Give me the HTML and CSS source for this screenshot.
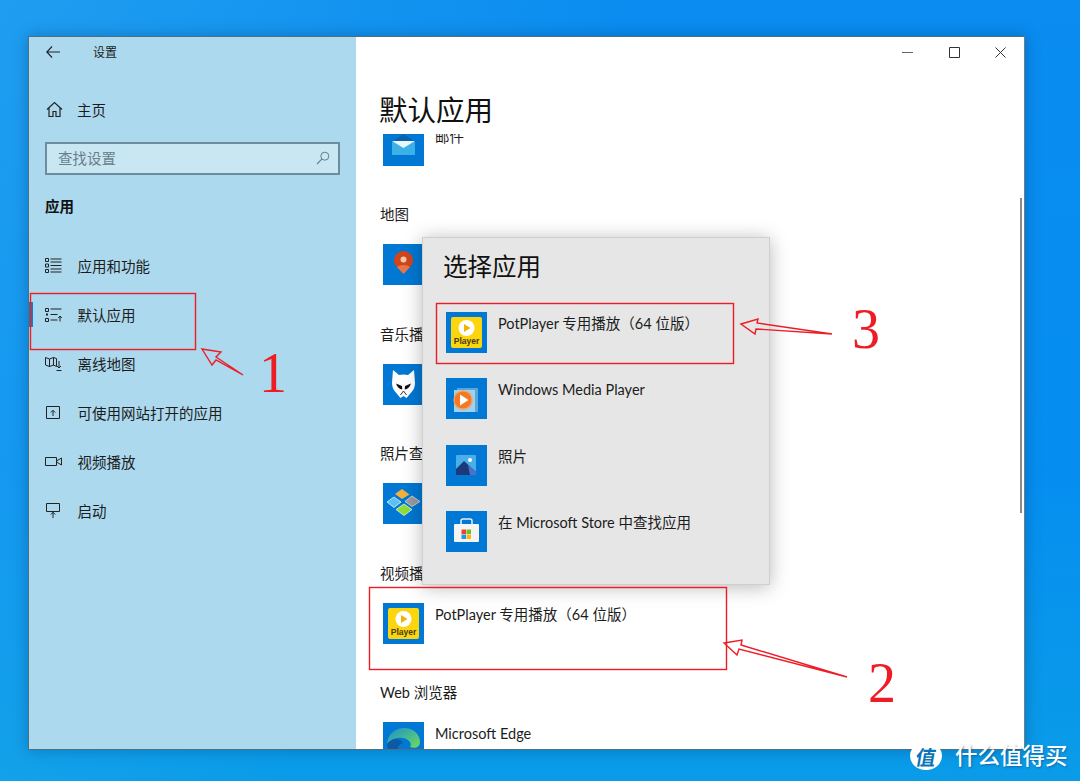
FILE: index.html
```html
<!DOCTYPE html>
<html lang="zh-CN">
<head>
  <meta charset="UTF-8">
  <title>设置 – 默认应用</title>
  <link rel="stylesheet" href="styles.css">
</head>
<body>
  <!-- icons used more than once -->
  <svg class="defs" width="0" height="0">
    <symbol id="icon-potplayer" viewBox="0 0 41 41">
      <rect x="5" y="5" width="31" height="31" rx="2" fill="#fbd60f"/>
      <circle cx="20.5" cy="16" r="8" fill="#fff"/>
      <path d="M18 12l6.500 4-6.500 4z" fill="#f0b400"/>
      <text class="player-label" x="20.5" y="32" text-anchor="middle">Player</text>
    </symbol>
  </svg>

  <div class="window">
    <aside class="sidebar">
      <div class="titlebar">
        <svg class="back-icon" width="14" height="12" viewBox="0 0 14 12"><path d="M6 .5L.8 6l5.200 5.500M.8 6H14" fill="none" stroke="#222" stroke-width="1.100"/></svg>
        <span class="titlebar-text">设置</span>
      </div>

      <div class="home-link">
        <svg width="17" height="17" viewBox="0 0 17 17"><path d="M1 8.500L8.500 1.500 16 8.500M3 7v8.500h4v-5h3v5h4V7" fill="none" stroke="#222" stroke-width="1.200"/></svg>
        <span>主页</span>
      </div>

      <div class="search-box">
        <span>查找设置</span>
        <svg width="14" height="14" viewBox="0 0 14 14"><circle cx="8.800" cy="5.200" r="4" fill="none" stroke="#5f7f8d"/><path d="M5.800 8.200L1 13" stroke="#5f7f8d" stroke-width="1.100"/></svg>
      </div>

      <h2 class="section-title">应用</h2>

      <nav class="nav">
        <div class="nav-item">
          <svg width="17" height="17" viewBox="0 0 17 17"><path d="M0.500 1.500h3v3h-3zM0.500 7h3v3h-3zM0.500 12.500h3v3h-3z" fill="none" stroke="#222"/><path d="M5.500 2h11M5.500 5h11M5.500 8.500h11M5.500 12h11M5.500 15h11" stroke="#222"/></svg>
          <span>应用和功能</span>
        </div>
        <div class="nav-item is-active">
          <svg width="17" height="17" viewBox="0 0 17 17"><path d="M0.500 2.500h3v3h-3zM0.500 12.500h3v3h-3z" fill="none" stroke="#222"/><path d="M1 8.500h2" stroke="#222" stroke-width="2"/><path d="M5.500 3h11M5.500 8.500h7M5.500 14h7" stroke="#222"/><path d="M15 15.500v-5M13.200 12L15 10l1.800 2" fill="none" stroke="#222"/></svg>
          <span>默认应用</span>
        </div>
        <div class="nav-item">
          <svg width="17" height="17" viewBox="0 0 17 17"><path d="M0.500 2.500l4 1.500 4-1.500 3 1v8l-3-1.500-4 1.500-4-1.500zM4.500 4v8M8.500 2.500v8" fill="none" stroke="#222"/><path d="M14 6v7M12 11l2 2 2-2M11.500 15.500h5" fill="none" stroke="#222"/></svg>
          <span>离线地图</span>
        </div>
        <div class="nav-item">
          <svg width="17" height="17" viewBox="0 0 17 17"><path d="M1.500 2.500h13v12h-13z" fill="none" stroke="#222"/><path d="M8 12V6.500M5.800 8.500L8 6.300l2.200 2.200" fill="none" stroke="#222"/></svg>
          <span>可使用网站打开的应用</span>
        </div>
        <div class="nav-item">
          <svg width="17" height="17" viewBox="0 0 17 17"><path d="M0.500 4.500h11v8h-11zM11.500 8l5-3v7l-5-3" fill="none" stroke="#222"/></svg>
          <span>视频播放</span>
        </div>
        <div class="nav-item">
          <svg width="17" height="17" viewBox="0 0 17 17"><path d="M1.500 1.500h13v8h-13z" fill="none" stroke="#222"/><path d="M8 16v-6M5.800 12.500L8 10.300l2.200 2.200" fill="none" stroke="#222"/></svg>
          <span>启动</span>
        </div>
      </nav>
    </aside>

    <main class="main">
      <div class="window-controls">
        <div class="window-btn"><svg width="11" height="11" viewBox="0 0 11 11"><path d="M0 5.500h11" stroke="#666"/></svg></div>
        <div class="window-btn"><svg width="11" height="11" viewBox="0 0 11 11"><path d="M0.500 0.500h10v10h-10z" fill="none" stroke="#333"/></svg></div>
        <div class="window-btn"><svg width="11" height="11" viewBox="0 0 11 11"><path d="M0.500 0.500l10 10M10.500 0.500l-10 10" stroke="#333"/></svg></div>
      </div>

      <h1 class="page-title">默认应用</h1>

      <div class="app-list">
        <div class="app-group first">
          <div class="app-row">
            <svg class="app-tile" viewBox="0 0 41 41">
              <rect width="41" height="41" fill="#0078d4"/>
              <path d="M9 17L20.500 9 32 17z" fill="#0a62ad"/>
              <rect x="9" y="17" width="23" height="13" fill="#3cb1e8"/>
              <path d="M9 16h23l-11.500 7z" fill="#e9f6fc"/>
            </svg>
            <span>邮件</span>
          </div>
        </div>

        <div class="app-group">
          <div class="group-label">地图</div>
          <div class="app-row">
            <svg class="app-tile" viewBox="0 0 41 41">
              <rect width="41" height="41" fill="#0078d4"/>
              <path d="M20.500 7a9.500 9.500 0 0 1 9.500 9.500c0 5-5 8-9.500 13.500C16 24.500 11 21.500 11 16.500A9.500 9.500 0 0 1 20.500 7z" fill="#d2451a"/>
              <path d="M14 23a8 5 0 0 1 13 0l-6.500 7z" fill="#e8764a"/>
              <circle cx="20.500" cy="15.500" r="3" fill="#f5c9a8"/>
            </svg>
          </div>
        </div>

        <div class="app-group">
          <div class="group-label">音乐播放器</div>
          <div class="app-row">
            <svg class="app-tile" viewBox="0 0 41 41">
              <rect width="41" height="41" fill="#0078d4"/>
              <path d="M10 6l6 5q4.500-1 9 0l6-5 1 13q0 5-3 8.500l-5.500 6.500-3-2-3 2-5.500-6.500q-3-3.500-3-8.500z" fill="#fff"/>
              <path d="M13 19.500l6 2.500.3 3.500q-4.500-.5-6.300-6zM28 19.500l-6 2.500-.3 3.500q4.500-.5 6.300-6z" fill="#111"/>
              <path d="M17.500 31l3-4 3 4" fill="none" stroke="#333"/>
            </svg>
          </div>
        </div>

        <div class="app-group">
          <div class="group-label">照片查看器</div>
          <div class="app-row">
            <svg class="app-tile" viewBox="0 0 41 41">
              <rect width="41" height="41" fill="#0078d4"/>
              <path d="M19 6l7.500 5.500L19 16l-7-5z" fill="#f4b03c"/>
              <path d="M11 14l7 5-7 5.500L4 19z" fill="#5cc0f0" stroke="#dff3fb" stroke-width=".8"/>
              <path d="M29 13l8 5.500-8 5-7-5z" fill="#9a9a9a" stroke="#ddd" stroke-width=".8"/>
              <path d="M21 21l8 5.500-8 6-8-6z" fill="#8fdc3c" stroke="#e4f6d0" stroke-width=".8"/>
            </svg>
          </div>
        </div>

        <div class="app-group">
          <div class="group-label">视频播放器</div>
          <div class="app-row">
            <svg class="app-tile" viewBox="0 0 41 41">
              <rect width="41" height="41" fill="#0078d4"/>
              <use href="#icon-potplayer"/>
            </svg>
            <span>PotPlayer 专用播放（64 位版）</span>
          </div>
        </div>

        <div class="app-group">
          <div class="group-label">Web 浏览器</div>
          <div class="app-row">
            <svg class="app-tile" viewBox="0 0 41 41">
              <defs>
                <linearGradient id="edge-top" x1="0" y1="0" x2="1" y2="1">
                  <stop offset="0" stop-color="#1a8fd0"/>
                  <stop offset="1" stop-color="#6fdc5a"/>
                </linearGradient>
              </defs>
              <rect width="41" height="41" fill="#0078d4"/>
              <path d="M4 22C5 11 13 6 21 6c9 0 16 6 16 14 0 5-5 7-10 5 1-1 1-3 0-5-4-6-17-6-23 2z" fill="url(#edge-top)"/>
              <path d="M4 22c5-7 14-6 16-1-5 1-7 7-4 13C9 33 4 28 4 22z" fill="#0c5aa6"/>
            </svg>
            <span>Microsoft Edge</span>
          </div>
        </div>
      </div>

      <div class="scrollbar"></div>
    </main>
  </div>

  <div class="chooser">
    <h3 class="chooser-title">选择应用</h3>
    <div class="chooser-list">
      <div class="chooser-row">
        <svg class="app-tile" viewBox="0 0 41 41">
          <rect width="41" height="41" fill="#0078d4"/>
          <use href="#icon-potplayer"/>
        </svg>
        <span>PotPlayer 专用播放（64 位版）</span>
      </div>
      <div class="chooser-row">
        <svg class="app-tile" viewBox="0 0 41 41">
          <rect width="41" height="41" fill="#0078d4"/>
          <rect x="11" y="10" width="21" height="24" fill="#5aa6d8"/>
          <rect x="8" y="12" width="21" height="22" fill="#9fd0ec"/>
          <circle cx="17" cy="22" r="9.500" fill="#f47a20"/>
          <circle cx="17" cy="22" r="9" fill="none" stroke="#fbc9a0" stroke-width=".6"/>
          <path d="M14 16.500l8.500 5.500-8.500 5.500z" fill="#fff"/>
        </svg>
        <span>Windows Media Player</span>
      </div>
      <div class="chooser-row">
        <svg class="app-tile" viewBox="0 0 41 41">
          <rect width="41" height="41" fill="#0078d4"/>
          <rect x="10" y="10" width="20" height="20" rx="1" fill="#49aeea"/>
          <circle cx="24" cy="15" r="2" fill="#fff"/>
          <path d="M10 30v-6l8-8 12 11v3z" fill="#1b3a7a"/>
          <path d="M22 20l8 7v3h-6z" fill="#4f70c9"/>
        </svg>
        <span>照片</span>
      </div>
      <div class="chooser-row">
        <svg class="app-tile" viewBox="0 0 41 41">
          <rect width="41" height="41" fill="#0078d4"/>
          <path d="M15 13v-3q0-2 2-2h7q2 0 2 2v3" fill="none" stroke="#e8eef2" stroke-width="1.500"/>
          <rect x="8" y="13" width="25" height="18" rx="1" fill="#f4f4f4"/>
          <rect x="15.500" y="18.500" width="4.500" height="4.500" fill="#e8452c"/>
          <rect x="20.500" y="18.500" width="4.500" height="4.500" fill="#6ebe30"/>
          <rect x="15.500" y="23.500" width="4.500" height="4.500" fill="#1f9ae0"/>
          <rect x="20.500" y="23.500" width="4.500" height="4.500" fill="#fbb910"/>
        </svg>
        <span>在 Microsoft Store 中查找应用</span>
      </div>
    </div>
  </div>

  <!-- red markup drawn on top of the screenshot -->
  <svg class="markup" width="1080" height="781" viewBox="0 0 1080 781">
    <g class="markup-lines">
      <rect x="30.500" y="293.500" width="165" height="56"/>
      <rect x="369.500" y="587.500" width="357" height="82"/>
      <rect x="436.500" y="303.500" width="297" height="60"/>
      <path d="M202 349L221 352 216 357 243 375 216 360 212 365z"/>
      <path d="M724 643L742 640 741 645 847 677 739 649 737 655z"/>
      <path d="M741 324L758 319 757 323 832 334 756 329 755 334z"/>
    </g>
    <text class="markup-digit" x="259" y="392">1</text>
    <text class="markup-digit" x="868" y="702">2</text>
    <text class="markup-digit" x="852" y="348">3</text>
  </svg>

  <div class="watermark">
    <span class="watermark-badge"><span>值</span></span>
    <span class="watermark-text">什么值得买</span>
  </div>
</body>
</html>
```

FILE: styles.css
```css
* {
  box-sizing: border-box;
}

body {
  margin: 0;
  width: 1080px;
  height: 781px;
  overflow: hidden;
  position: relative;
  padding: 36px 0 0 28px;
  font-family: Lato, "Noto Sans CJK SC", sans-serif;
  font-size: 14.5px;
  color: #1c1c1c;
  background:
    linear-gradient(115deg, rgba(70, 190, 240, 0.35) 0%, rgba(70, 190, 240, 0) 45%),
    linear-gradient(180deg, #0a8cf0 0%, #058ef0 60%, #0a9ce8 100%);
}

.defs {
  position: absolute;
}

.player-label {
  font-family: "Liberation Sans", sans-serif;
  font-size: 8.5px;
  font-weight: bold;
  fill: #4a3c10;
}

.window {
  display: flex;
  width: 997px;
  height: 714px;
  border: 1px solid #4d7183;
  border-right-color: #6f7f8a;
  box-shadow: 0 0 14px rgba(0, 50, 100, 0.35);
  background: #fff;
}

/* left column */
.sidebar {
  width: 327px;
  flex-shrink: 0;
  padding-left: 16px;
  background: #acd9ee;
}

.titlebar {
  display: flex;
  align-items: center;
  height: 30px;
}

.back-icon {
  margin-left: 1px;
}

.titlebar-text {
  margin-left: 33px;
  padding-bottom: 2px;
  font-size: 12px;
}

.home-link {
  display: flex;
  align-items: center;
  gap: 14px;
  height: 48px;
  margin-top: 19px;
  padding: 0 0 2px 1px;
}

.search-box {
  display: flex;
  align-items: center;
  justify-content: space-between;
  width: 295px;
  height: 33px;
  margin-top: 8px;
  padding: 0 8px 2px 11px;
  border: 2px solid #6b8d9e;
  background: #c9e6f3;
  color: #687f8a;
}

.section-title {
  margin: 22px 0 0;
  font-size: 14.5px;
  line-height: 20px;
  font-weight: bold;
  color: #111;
}

.nav {
  margin-top: 23.5px;
}

.nav-item {
  position: relative;
  display: flex;
  align-items: center;
  gap: 15.5px;
  height: 49px;
}

.is-active::before {
  content: "";
  position: absolute;
  left: -16px;
  top: 12px;
  width: 4px;
  height: 25px;
  background: #0f7fd0;
}

/* right column */
.main {
  position: relative;
  flex: 1;
  display: flex;
  flex-direction: column;
  min-width: 0;
  padding-left: 24px;
}

.window-controls {
  display: flex;
  justify-content: flex-end;
  height: 30px;
}

.window-btn {
  display: flex;
  align-items: center;
  justify-content: center;
  width: 46.5px;
}

.page-title {
  margin: 23px 0 4px -1px;
  font-size: 28.5px;
  line-height: 40px;
  font-weight: 400;
  color: #111;
}

.app-list {
  flex: 1;
  overflow: hidden;
}

.app-group {
  margin-bottom: 38.5px;
}

.app-group.first {
  margin-top: -9px;
  margin-bottom: 38px;
}

.group-label {
  margin-bottom: 19px;
  padding-top: 1px;
  line-height: 20px;
}

.app-row {
  display: flex;
  gap: 11px;
  height: 41px;
  margin-left: 3px;
  line-height: 23px;
}

.app-tile {
  display: block;
  width: 41px;
  height: 41px;
  flex-shrink: 0;
}

.scrollbar {
  position: absolute;
  top: 161px;
  right: 2px;
  width: 2px;
  height: 315px;
  background: #8a8a8a;
}

/* app chooser popup */
.chooser {
  position: absolute;
  left: 422px;
  top: 237px;
  width: 348px;
  height: 348px;
  padding: 11px 0 0 20px;
  background: #e6e6e6;
  border: 1px solid #cfcfcf;
  box-shadow: 0 2px 18px rgba(0, 0, 0, 0.28);
}

.chooser-title {
  margin: 0;
  font-size: 24.5px;
  line-height: 36px;
  font-weight: 400;
  color: #111;
}

.chooser-list {
  display: flex;
  flex-direction: column;
  gap: 25.3px;
  margin: 27px 0 0 3px;
}

.chooser-row {
  display: flex;
  gap: 11px;
  height: 41px;
  line-height: 23.5px;
}

/* annotations */
.markup {
  position: absolute;
  left: 0;
  top: 0;
  pointer-events: none;
}

.markup-lines {
  fill: none;
  stroke: #ee1c25;
  stroke-width: 1.4;
}

.markup-digit {
  font-family: "Liberation Serif", serif;
  font-size: 56px;
  fill: #ee1c25;
}

.watermark {
  position: absolute;
  left: 910px;
  top: 742px;
  display: flex;
  align-items: center;
  gap: 13px;
}

.watermark-badge {
  display: flex;
  align-items: center;
  justify-content: center;
  width: 32px;
  height: 28px;
  border-radius: 50%;
  background: #fff;
  color: #0a74b8;
  font-size: 20px;
  font-weight: 700;
}

.watermark-badge span {
  transform: skewX(-10deg);
}

.watermark-text {
  font-size: 22.5px;
  line-height: 24px;
  font-weight: 500;
  color: #fff;
  text-shadow: 1px 1px 2px rgba(0, 60, 110, 0.5);
}
```
